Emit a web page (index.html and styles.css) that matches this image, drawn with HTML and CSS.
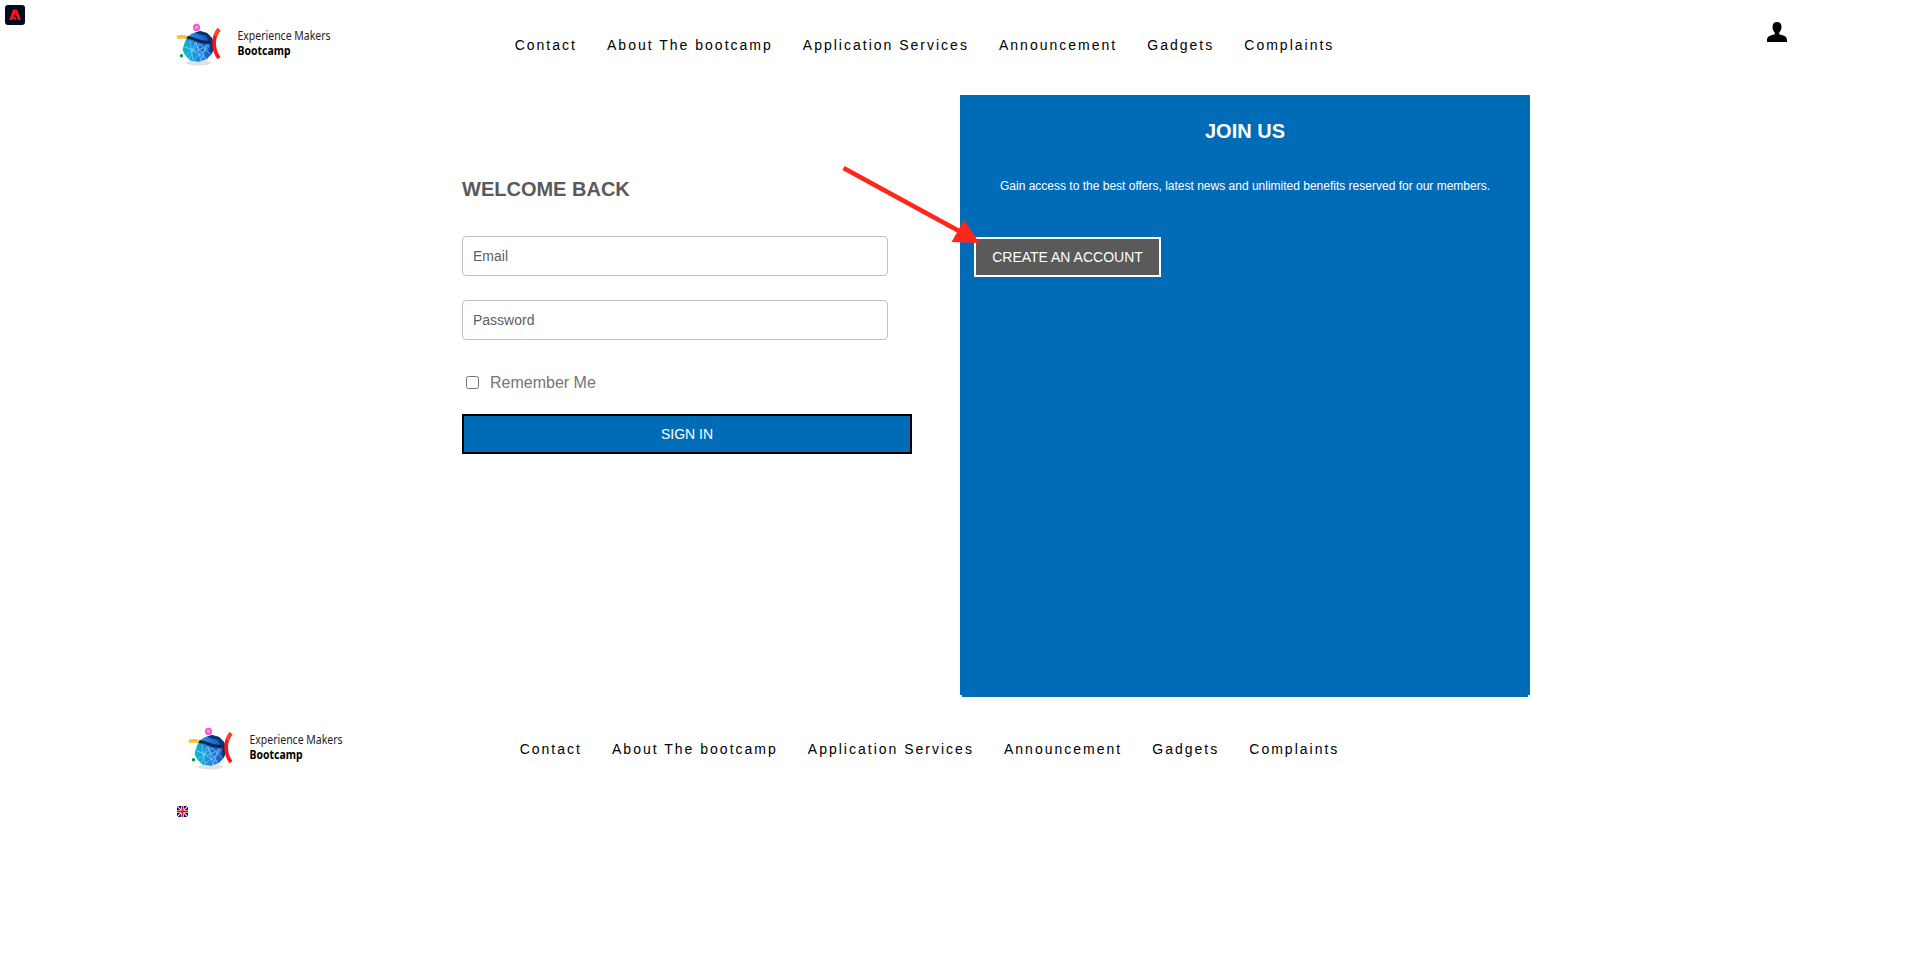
FILE: index.html
```
<!DOCTYPE html>
<html lang="en">
<head>
<meta charset="utf-8">
<title>Experience Makers Bootcamp</title>
<link rel="stylesheet" href="styles.css">
</head>
<body>
<svg class="sprites" aria-hidden="true">
  <defs>
    <linearGradient id="sea" x1="0" x2="1" y1=".6" y2=".4">
      <stop offset="0" stop-color="#06c3c4"/>
      <stop offset=".35" stop-color="#1f8fe0"/>
      <stop offset=".75" stop-color="#1b5fd6"/>
      <stop offset="1" stop-color="#123f9c"/>
    </linearGradient>
  </defs>
  <symbol id="globe" viewBox="0 0 46 44">
    <ellipse cx="22.500" cy="39.800" rx="12.500" ry="2.700" fill="#dce1e8"/>
    <path d="M16 10.500 24 8 31 10 36 15 38 22 36.500 30 31 36 23 38.700 14 37.500 9 32 6.500 27 8.500 20 11 14Z" fill="url(#sea)"/>
    <path d="M19 9.800 24 8 31 10 36 15 38 22 37 28 34.500 30 34 20 30 13 22 11Z" fill="#0b3563"/>
    <g fill="none" stroke="#8fdcf8" stroke-width=".6">
      <path d="M9 24 20 28 34 22M10 32 24 21 34 31M13 37 19 20 30 36M14 18 17 37 33 24M10 24 29 35M20 19 25 38 31 21"/>
    </g>
    <path d="M10 14.500C20 14 22 21 34 19" fill="none" stroke="#07264a" stroke-width="3"/>
    <path d="M1 14.600C4.500 13.300 7 13.300 11 14.800" fill="none" stroke="#fdbd2e" stroke-width="3.600"/>
    <circle cx="20.500" cy="4.400" r="2.450" fill="#fff" stroke="#fb55cc" stroke-width="2.300"/>
    <path d="M19.300 4.400h2.400M20.500 3.200v2.400" stroke="#fb55cc" stroke-width=".6"/>
    <circle cx="5.500" cy="32.700" r="1.700" fill="#07964b"/>
    <path d="M43 6.300C36.500 14 36.500 26 43 35.300" fill="none" stroke="#fa1418" stroke-width="3.700"/>
    <path d="M43 6.300Q40.500 9.300 39.400 13" fill="none" stroke="#fc4326" stroke-width="3.700"/>
  </symbol>
</svg>

<header class="bar">
  <svg class="brand" width="160" height="50" viewBox="0 0 160 50">
    <use href="#globe" x="0" y="0" width="46" height="44"/>
    <text class="brand-name" x="61.500" y="17" textLength="93" lengthAdjust="spacingAndGlyphs">Experience Makers</text>
    <text class="brand-name brand-strong" x="61.500" y="32.400" textLength="53" lengthAdjust="spacingAndGlyphs">Bootcamp</text>
  </svg>
  <nav class="nav">
    <a>Contact</a><a>About The bootcamp</a><a>Application Services</a><a>Announcement</a><a>Gadgets</a><a>Complaints</a>
  </nav>
  <svg class="user" width="20" height="20" viewBox="0 0 20 20"><path d="M10 0C7.200 0 5.500 1.800 5.500 5c0 2.200.8 4 2.200 5.200v2.300C4 13.200 0 14 0 18v2h20v-2c0-4-4-4.800-7.700-5.500v-2.300C13.700 9 14.500 7.200 14.500 5 14.500 1.800 12.800 0 10 0Z"/></svg>
</header>

<main class="main">
  <section class="login">
    <h2 class="title">WELCOME BACK</h2>
    <input class="field" type="email" placeholder="Email">
    <input class="field" type="password" placeholder="Password">
    <label class="remember"><input class="check" type="checkbox"><span class="remember-text">Remember Me</span></label>
    <button class="btn btn-signin">SIGN IN</button>
  </section>
  <section class="join">
    <h2 class="title join-title">JOIN US</h2>
    <p class="join-text">Gain access to the best offers, latest news and unlimited benefits reserved for our members.</p>
    <button class="btn btn-create">CREATE AN ACCOUNT</button>
  </section>
</main>

<footer>
  <div class="bar bar-footer">
    <svg class="brand" width="160" height="50" viewBox="0 0 160 50">
      <use href="#globe" x="0" y="0" width="46" height="44"/>
      <text class="brand-name" x="61.500" y="17" textLength="93" lengthAdjust="spacingAndGlyphs">Experience Makers</text>
      <text class="brand-name brand-strong" x="61.500" y="32.400" textLength="53" lengthAdjust="spacingAndGlyphs">Bootcamp</text>
    </svg>
    <nav class="nav">
      <a>Contact</a><a>About The bootcamp</a><a>Application Services</a><a>Announcement</a><a>Gadgets</a><a>Complaints</a>
    </nav>
  </div>
  <svg class="flag" width="11" height="11" viewBox="0 0 11 11">
    <path fill="#0a126e" d="M0 0h11v11H0z"/>
    <path d="M0 0 11 11M11 0 0 11" stroke="#fff" stroke-width="1.100"/>
    <path d="M5.500 0v11M0 5.500h11" stroke="#fff" stroke-width="3"/>
    <path d="M5.500 0v11M0 5.500h11" stroke="#d8142c" stroke-width="1.800"/>
  </svg>
</footer>

<svg class="badge" width="20" height="20" viewBox="0 0 20 20">
  <rect width="20" height="20" rx="3" fill="#000b1d"/>
  <path d="M8 4.500h4.200L16 15h-2.900l-2.800-6.500L8.700 12h1.900l1.200 3H9.900L9.200 13.300 7 15H4.200Z" fill="#fa0f19"/>
</svg>
<svg class="arrow" width="140" height="82" viewBox="0 0 140 82">
  <path d="M1.500 5 117 68" stroke="#ff261b" stroke-width="4.800"/>
  <path d="M137.500 80 122 57 109.500 79Z" fill="#ff261b"/>
</svg>
</body>
</html>
```

FILE: styles.css
```
* { box-sizing: border-box; }
body {
  margin: 0;
  background: #fff;
  font-family: "Liberation Sans", Arial, sans-serif;
}
.sprites { position: absolute; width: 0; height: 0; }

.bar {
  display: flex;
  align-items: flex-start;
  height: 95px;
  padding: 23px 131px 0 176px;
}
.brand { flex: none; overflow: visible; }
.brand-name { font-family: "Noto Sans", sans-serif; font-size: 12.5px; fill: #222; }
.brand-strong { font-weight: 700; fill: #000; }
.nav {
  display: flex;
  gap: 30.100px;
  margin: 14px 0 0 178.700px;
  font-size: 14px;
  line-height: 16px;
  letter-spacing: 2px;
  color: #000;
  white-space: nowrap;
}
.user { margin: -1px 0 0 auto; }

.main { display: flex; height: 602px; padding-left: 462px; }
.login { width: 498px; padding-top: 82px; }
.title {
  margin: 0;
  font-size: 20px;
  line-height: 24px;
  font-weight: 700;
  color: #5a5a5a;
}
.login .title { margin-bottom: 35px; }
.field {
  display: block;
  width: 426px;
  height: 40px;
  margin: 0 0 24px;
  padding: 0 10px;
  border: 1px solid #c0c0c0;
  border-radius: 4px;
  font: 14px "Liberation Sans", Arial, sans-serif;
  color: #5a5a5a;
}
.field::placeholder { color: #606060; }
.remember {
  display: flex;
  align-items: center;
  height: 18px;
  margin-top: 33px;
  font-size: 16px;
  color: #757575;
}
.remember-text { padding-top: 1px; }
.check { width: 13px; height: 13px; margin: 0 11px 0 4px; }
.btn {
  display: block;
  height: 40px;
  padding: 0;
  border-radius: 0;
  font: 14px "Liberation Sans", Arial, sans-serif;
  color: #fff;
}
.btn-signin {
  width: 450px;
  margin-top: 23px;
  border: 2px solid #000;
  background: #006cb8;
}
.join {
  width: 570px;
  height: 600px;
  padding: 24px 14px 0;
  background: #006cb8;
  text-align: center;
}
/* Strip closing the panel, inset 2px on each side */
.join::after {
  content: "";
  display: block;
  height: 2px;
  margin: 418px -12px 0;
  background: #006cb8;
}
.join-title { color: #fff; }
.join-text { margin: 36px 0 43px; font-size: 12px; line-height: 15px; color: #fff; white-space: nowrap; }
.btn-create {
  width: 187px;
  border: 2px solid #fff;
  background: #5a5a5a;
}

.bar-footer { height: 109px; padding: 30px 0 0 188px; }
.bar-footer .nav { margin-left: 171.700px; }
.flag { display: block; margin-left: 177px; }

.badge { position: absolute; left: 5px; top: 5px; }
.arrow { position: absolute; left: 842px; top: 163px; }
```
